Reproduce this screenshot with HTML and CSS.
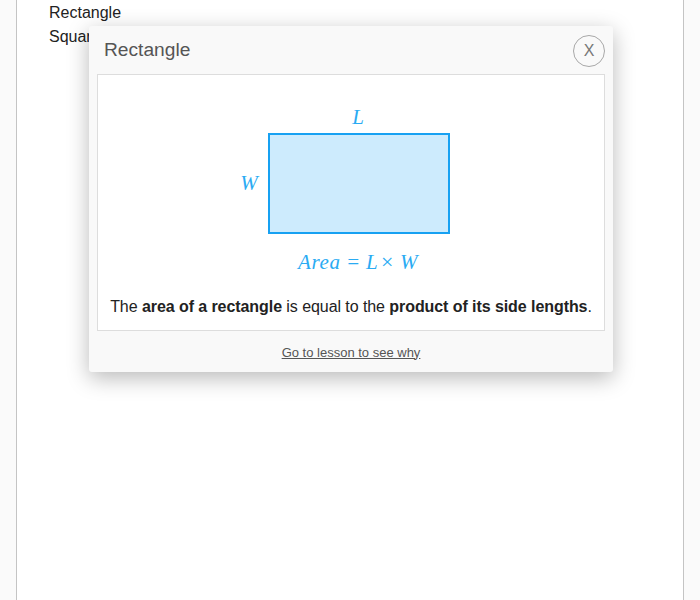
FILE: index.html
```html
<!DOCTYPE html>
<html>
<head>
<meta charset="utf-8">
<link rel="stylesheet" href="styles.css">
</head>
<body>
<div class="page">
  <ul class="list">
    <li>Rectangle</li>
    <li>Square</li>
  </ul>
  <div class="modal">
    <div class="modal-header">
      <span class="modal-title">Rectangle</span>
      <button class="close">X</button>
    </div>
    <div class="modal-body">
      <svg class="figure" width="242" height="185" viewBox="0 0 242 185">
        <rect x="39" y="39" width="180" height="99" fill="#cdebfd" stroke="#17a1f2" stroke-width="2"/>
        <g fill="#2aabf3" font-family="'Liberation Serif', serif" font-style="italic" font-size="21">
          <text x="128" y="29" text-anchor="middle">L</text>
          <text x="19" y="95" text-anchor="middle">W</text>
          <text x="68" y="174" textLength="42">Area</text>
          <text x="116" y="174">=</text>
          <text x="136" y="174">L</text>
          <text x="151" y="174" font-style="normal" font-size="22">×</text>
          <text x="170" y="174">W</text>
        </g>
      </svg>
      <p class="fact">The <b>area of a rectangle</b> is equal to the <b>product of its side lengths</b>.</p>
    </div>
    <div class="modal-footer">
      <a class="lesson-link" href="#">Go to lesson to see why</a>
    </div>
  </div>
</div>
</body>
</html>
```
FILE: styles.css
```css
html, body {
  margin: 0;
  padding: 0;
  background: #fafafa;
  font-family: "Liberation Sans", Arial, sans-serif;
}
.page {
  position: relative;
  margin: 0 16px;
  min-height: 600px;
  background: #fff;
  border-left: 1px solid #c4c4c4;
  border-right: 1px solid #c4c4c4;
  box-sizing: border-box;
}
.list {
  list-style: none;
  margin: 0;
  padding: 1px 0 0 32px;
  font-size: 16px;
  line-height: 24px;
  color: #222;
}
.modal {
  position: absolute;
  top: 26px;
  left: 72px;
  width: 524px;
  background: #f9f9f9;
  border-radius: 3px;
  box-shadow: 0 6px 22px rgba(0, 0, 0, 0.28);
}
.modal-header {
  display: flex;
  align-items: center;
  justify-content: space-between;
  height: 48px;
  padding: 0 8px 0 15px;
}
.modal-title {
  font-size: 19.2px;
  color: #555;
}
.close {
  width: 32px;
  height: 32px;
  border-radius: 50%;
  border: 1px solid #a8a8a8;
  background: transparent;
  color: #777;
  font-family: "Liberation Sans", Arial, sans-serif;
  font-size: 16px;
  padding: 0;
  margin-top: 2px;
  line-height: 30px;
  text-align: center;
}
.modal-body {
  margin: 0 8px;
  background: #fff;
  border: 1px solid #ddd;
  height: 255px;
  display: flex;
  flex-direction: column;
  align-items: center;
}
.figure {
  display: block;
  margin-top: 20px;
}
.fact {
  margin: 18px 0 0;
  font-size: 16px;
  letter-spacing: -0.07px;
  color: #222;
}
.fact b {
  font-weight: bold;
}
.modal-footer {
  height: 41px;
  display: flex;
  align-items: center;
  justify-content: center;
  padding-top: 1px;
  box-sizing: border-box;
}
.lesson-link {
  font-size: 13px;
  color: #555;
  text-decoration: underline;
}
```
